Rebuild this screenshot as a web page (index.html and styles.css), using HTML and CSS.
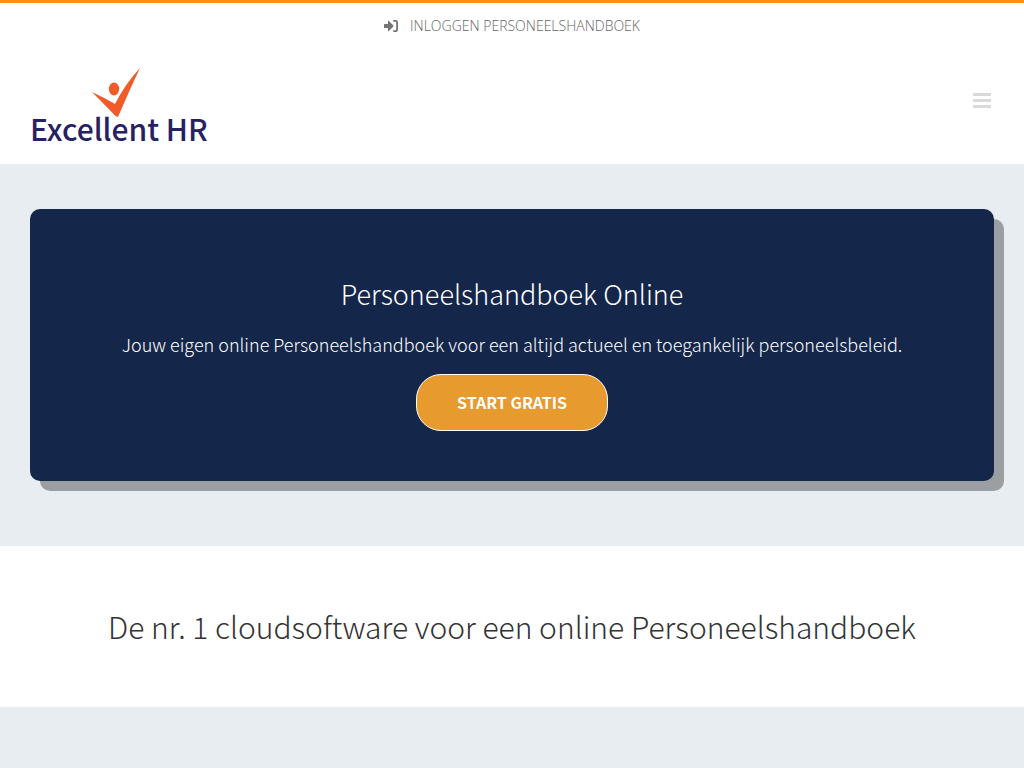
FILE: index.html
```html
<!DOCTYPE html>
<html lang="nl">
<head>
    <meta charset="UTF-8">
    <meta name="viewport" content="width=device-width, initial-scale=1.0">
    <title>Personeelshandboek Online - Excellent HR</title>
    <link rel="stylesheet" href="styles.css">
</head>
<body>
    <header>
        <div class="topbar">
            <a href="#inloggen" class="login-link">
                <svg class="login-icon" viewBox="0 0 14 12" aria-hidden="true">
                    <path d="M0 4.6Q0 4 .6 4H4V1.2Q4 .2 4.8.9L9.2 5.3Q9.8 6 9.2 6.7L4.8 11.1Q4 11.8 4 10.8V8H.6Q0 8 0 7.4Z"/>
                    <path d="M9.2 0H11.8Q14 0 14 2.2V9.8Q14 12 11.8 12H9.2V10.2H11.6Q12.2 10.2 12.2 9.6V2.4Q12.2 1.8 11.6 1.8H9.2Z"/>
                </svg>
                <span>Inloggen Personeelshandboek</span>
            </a>
        </div>
        <div class="header-main">
            <a href="#home" class="logo">
                <svg class="logo-mark" viewBox="0 0 48 49" aria-hidden="true">
                    <path d="M0 24Q11 29 23 36Q33 16 48 0Q38 21 26 49L23.500 48Q12 36 0 24Z"/>
                    <ellipse cx="22" cy="21" rx="5.200" ry="6.400"/>
                </svg>
                <span class="logo-text">Excellent HR</span>
            </a>
            <button type="button" class="menu-toggle" aria-label="Menu">
                <svg viewBox="0 0 18 15" aria-hidden="true">
                    <path d="M0 0H18V3H0ZM0 6H18V9H0ZM0 12H18V15H0Z"/>
                </svg>
            </button>
        </div>
    </header>

    <main>
        <section class="hero">
            <div class="hero-card">
                <h1>Personeelshandboek Online</h1>
                <p>Jouw eigen online Personeelshandboek voor een altijd actueel en toegankelijk personeelsbeleid.</p>
                <a href="#start" class="btn">Start gratis</a>
            </div>
        </section>

        <section class="intro">
            <h2>De nr. 1 cloudsoftware voor een online Personeelshandboek</h2>
        </section>
    </main>
</body>
</html>
```
FILE: styles.css
```css
:root {
    --navy: #142649;
    --orange: #f7930d;
    --button: #e79a2e;
    --light: #e7edf1;
    --text: #333;
}

* {
    box-sizing: border-box;
}

body {
    margin: 0;
    background-color: var(--light);
    color: var(--text);
    font-family: 'Noto Sans CJK JP', 'Noto Sans CJK SC', sans-serif;
    font-weight: 300;
}

header {
    background: white;
    border-top: 3px solid var(--orange);
}

.topbar {
    display: flex;
    justify-content: center;
    height: 45px;
}

.login-link {
    display: flex;
    align-items: center;
    gap: 12px;
    color: #666;
    font-family: 'Open Sans', sans-serif;
    font-size: 14px;
    font-weight: 300;
    text-decoration: none;
    text-transform: uppercase;
}

.login-icon {
    width: 14px;
    height: 12px;
    fill: #747474;
}

.header-main {
    display: flex;
    align-items: center;
    justify-content: space-between;
    padding: 20px 30px 19px;
}

.logo {
    display: flex;
    flex-direction: column;
    padding-bottom: 6px;
    color: #262262;
    text-decoration: none;
}

.logo-mark {
    width: 48px;
    height: 49px;
    margin-left: 62px;
    fill: #f15a29;
}

.logo-text {
    font-size: 30px;
    font-weight: 500;
    line-height: 22px;
}

.menu-toggle {
    margin-bottom: 12px;
    padding: 3px;
    border: none;
    background: none;
    cursor: pointer;
}

.menu-toggle svg {
    display: block;
    width: 18px;
    height: 15px;
    fill: #dadada;
}

.hero {
    padding: 45px 30px 65px;
}

.hero-card {
    padding: 64px 30px 50px;
    border-radius: 10px;
    background-color: var(--navy);
    box-shadow: 10px 10px 0 #9b9fa2;
    color: white;
    text-align: center;
}

.hero-card h1 {
    margin: 0 0 14px;
    font-size: 27px;
    font-weight: 300;
    line-height: 42px;
}

.hero-card p {
    margin: 0 0 15px;
    font-size: 18px;
    line-height: 30px;
}

.btn {
    display: inline-block;
    vertical-align: top;
    padding: 13px 40px;
    border: 1px solid white;
    border-radius: 25px;
    background-color: var(--button);
    color: white;
    font-size: 16px;
    font-weight: bold;
    line-height: 29px;
    text-decoration: none;
    text-transform: uppercase;
}

.intro {
    padding: 56px 30px;
    background: white;
    text-align: center;
}

.intro h2 {
    margin: 0;
    font-size: 30px;
    font-weight: 300;
    line-height: 49px;
}
```
